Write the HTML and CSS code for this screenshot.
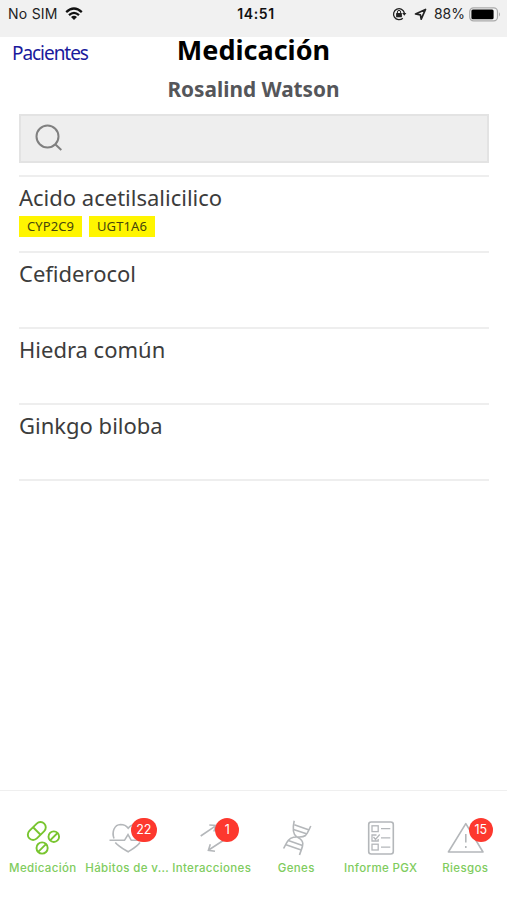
FILE: index.html
```html
<!DOCTYPE html>
<html lang="es">
<head>
<meta charset="utf-8">
<title>Medicación</title>
<link rel="stylesheet" href="styles.css">
</head>
<body>
<div class="status">
  <div class="status-left"><span class="carrier">No SIM</span>
    <svg width="18" height="14" viewBox="0 0 18 14"><g fill="none" stroke="#111" stroke-width="2.3"><path d="M1.2 5.1Q9-2 16.8 5.1"/><path d="M4 8.1Q9 3.7 14 8.1"/></g><path d="M9 12.9L6 9.9Q9 7.5 12 9.9Z" fill="#111"/></svg>
  </div>
  <span class="clock">14:51</span>
  <div class="status-right">
    <svg class="lock" width="15" height="14" viewBox="0 0 15 14"><path d="M10.8 11.2A5.5 5.5 0 1 1 12.4 6" fill="none" stroke="#222" stroke-width="1.3"/><path d="M10.2 6H14.4L12.3 8.8Z" fill="#222"/><rect x="4.1" y="6" width="5.8" height="4.2" rx=".5" fill="#222"/><path d="M5.4 6.5V5a1.6 1.6 0 0 1 3.2 0v1.5" fill="none" stroke="#222"/></svg>
    <svg class="arrow" width="13" height="13" viewBox="0 0 13 13"><path d="M1.5 6L11.5 1.4L7.2 11.2L6.4 6.8Z" fill="none" stroke="#222" stroke-width="1.7" stroke-linejoin="round"/></svg>
    <span class="percent">88%</span>
    <svg class="battery" width="32" height="15" viewBox="0 0 32 15"><rect x=".7" y=".9" width="27.8" height="13" rx="3.8" fill="#f4f4f4" stroke="#aaa" stroke-width="1.2"/><rect x="2.4" y="2.6" width="22.2" height="9.7" rx="1.5"/><path d="M30 5.3q2 2.1 0 4.2Z" fill="#aaa"/></svg>
  </div>
</div>
<header class="header">
  <a class="back">Pacientes</a>
  <h1>Medicación</h1>
  <span></span>
</header>
<h2>Rosalind Watson</h2>
<main>
  <div class="search"><svg width="30" height="30" viewBox="0 0 30 30" fill="none" stroke="#808080" stroke-width="2"><circle cx="13.5" cy="12.5" r="11"/><path d="M21.2 20.2L27.3 26"/></svg></div>
  <ul class="list">
    <li><span class="drug">Acido acetilsalicilico</span><div class="genes"><span class="gene">CYP2C9</span><span class="gene wide">UGT1A6</span></div></li>
    <li><span class="drug">Cefiderocol</span></li>
    <li><span class="drug">Hiedra común</span></li>
    <li><span class="drug">Ginkgo biloba</span></li>
  </ul>
</main>
<nav class="tabs">
  <div class="tab active">
    <div class="icon"><svg viewBox="0 0 40 40"><g transform="rotate(-45 14.8 13)"><rect x="4.3" y="7.7" width="21" height="10.6" rx="5.3"/><path d="M14.8 7.7v10.6"/></g><circle cx="31.8" cy="18.7" r="5.3"/><path d="M28.1 22.4l7.4-7.4"/><circle cx="20.1" cy="30" r="5.6"/><path d="M16.2 33.9l7.8-7.8"/></svg></div>
    <span class="label">Medicación</span>
  </div>
  <div class="tab">
    <div class="icon"><svg viewBox="0 0 40 40"><path d="M7 20.500C4.500 13.500 7.500 6.800 13.500 6.500c4 0 6 1.400 7.700 3.700C23 7.700 26 6.500 29 6.500c6.500.5 8.500 7.500 6 14M8.300 24.500C11.500 28.500 16.500 31 21.200 33.800c4.300-2.800 9-5.300 11.800-9.300"/><path d="M2.500 22.300H17.500l3.500-5.800 3.300 5.800H34"/></svg><b class="badge two">22</b></div>
    <span class="label">Hábitos de v...</span>
  </div>
  <div class="tab">
    <div class="icon"><svg viewBox="0 0 40 40"><path d="M9.700 18L25 7.700M18.300 7L25.300 7.400 22.800 13.500M33 22L17.700 32M19.300 26.300L17.400 32.300 24 33.300"/></svg><b class="badge">1</b></div>
    <span class="label">Interacciones</span>
  </div>
  <div class="tab">
    <div class="icon"><svg viewBox="0 0 40 40"><path d="M18.200 2.800C16.800 9 16 15.500 20.500 18.700 23 20.500 26.500 21 26.800 25.500 27 29 24.800 32.500 23.500 37M34.800 8C33 11.500 32 15 29.500 17.500 26 20.200 21.500 18.300 17.500 19.200 12 20.500 10.500 25 7.600 30.500"/><path d="M18.300 6.700l14.900 5.200M17.500 11.400l13.700 4.700M12.300 22.600l14.200 4.900M10 26.700l15.200 5.200"/></svg></div>
    <span class="label">Genes</span>
  </div>
  <div class="tab">
    <div class="icon"><svg viewBox="0 0 40 40"><rect x="8.700" y="4" width="24.600" height="32" rx="2.500"/><g stroke-width="1.300"><rect x="12" y="7.800" width="6.200" height="5.800"/><path d="M16.500 17H12v6h6.200v-2M13.500 19l2 2.500 4.200-5"/><rect x="12" y="26.200" width="6.200" height="5.800"/><path d="M21 10.700h9.300M21 19.900h9.300M21 29.200h9.300"/></g></svg></div>
    <span class="label">Informe PGX</span>
  </div>
  <div class="tab">
    <div class="icon"><svg viewBox="0 0 40 40"><path d="M20.800 5.700L38 34H3.400Z" stroke-linejoin="round"/><path d="M20.800 16v8.500M20.800 28v2"/></svg><b class="badge">15</b></div>
    <span class="label">Riesgos</span>
  </div>
</nav>
</body>
</html>
```
FILE: styles.css
```css
* { box-sizing: border-box; }
body {
  margin: 0;
  height: 900px;
  display: flex;
  flex-direction: column;
  background: #fff;
  font-family: "Noto Sans", sans-serif;
  overflow: hidden;
}
.status {
  height: 37px;
  padding: 0 6px 9px 8px;
  display: grid;
  grid-template-columns: 1fr auto 1fr;
  align-items: center;
  background: #f1f1f1;
  color: #222;
  font: 14px/20px Inter, sans-serif;
}
.status-left, .status-right { display: flex; align-items: center; }
.status-left { gap: 7px; }
.carrier { letter-spacing: .25px; }
.status-right { justify-content: flex-end; }
.clock { padding-left: 3px; font-weight: 600; letter-spacing: .6px; color: #111; }
.lock { margin-right: 7px; }
.arrow { margin-right: 7px; }
.percent { margin-right: 4px; }
.header {
  height: 36px;
  padding: 0 12px;
  display: grid;
  grid-template-columns: 1fr auto 1fr;
  align-items: baseline;
}
.back { font-size: 19px; letter-spacing: -1.05px; color: #1a1a9c; }
h1 { margin: 0; font-size: 27px; line-height: 26px; font-weight: 700; color: #000; }
h2 { margin: 0; height: 41.4px; font-size: 20.8px; line-height: 32px; text-align: center; font-weight: 700; color: #55565a; }
main { flex: 1; padding: 0 18px 0 19px; }
.search {
  height: 49px;
  padding-left: 13px;
  display: flex;
  align-items: center;
  background: #eee;
  border: 2px solid #e3e3e3;
}
.list { margin: 12px 0 0; padding: 0; list-style: none; border-top: 2px solid #eee; }
.list li { height: 75.8px; padding-top: 4px; border-bottom: 2px solid #eee; }
.drug { display: block; font-size: 22px; line-height: 32px; color: #3c3c3c; }
.genes { display: flex; gap: 7px; margin-top: 2.5px; }
.gene {
  width: 63px;
  height: 21px;
  background: #fff500;
  color: #45440c;
  font-size: 13px;
  letter-spacing: .1px;
  line-height: 20px;
  text-align: center;
}
.gene.wide { width: 66px; }
.tabs {
  height: 110px;
  padding-top: 27px;
  display: grid;
  grid-template-columns: repeat(6, 1fr);
  border-top: 1px solid #efefef;
}
.tab { min-width: 0; display: flex; flex-direction: column; align-items: center; }
.icon { position: relative; width: 40px; height: 40px; color: #b4b7ba; }
.icon svg { display: block; width: 40px; height: 40px; fill: none; stroke: currentColor; stroke-width: 1.6; }
.active .icon { color: #78c52f; }
.active svg { stroke-width: 1.9; }
.badge {
  position: absolute;
  left: 24px;
  top: 0;
  width: 24px;
  height: 24px;
  border-radius: 12px;
  background: #fd382e;
  color: #fff;
  font: 12.5px/24px Inter, sans-serif;
  text-align: center;
}
.badge.two { width: 26px; }
.label { padding-left: 1px; font: 500 11.5px/20px Inter, sans-serif; letter-spacing: .35px; color: #80cc5e; white-space: nowrap; }
```
